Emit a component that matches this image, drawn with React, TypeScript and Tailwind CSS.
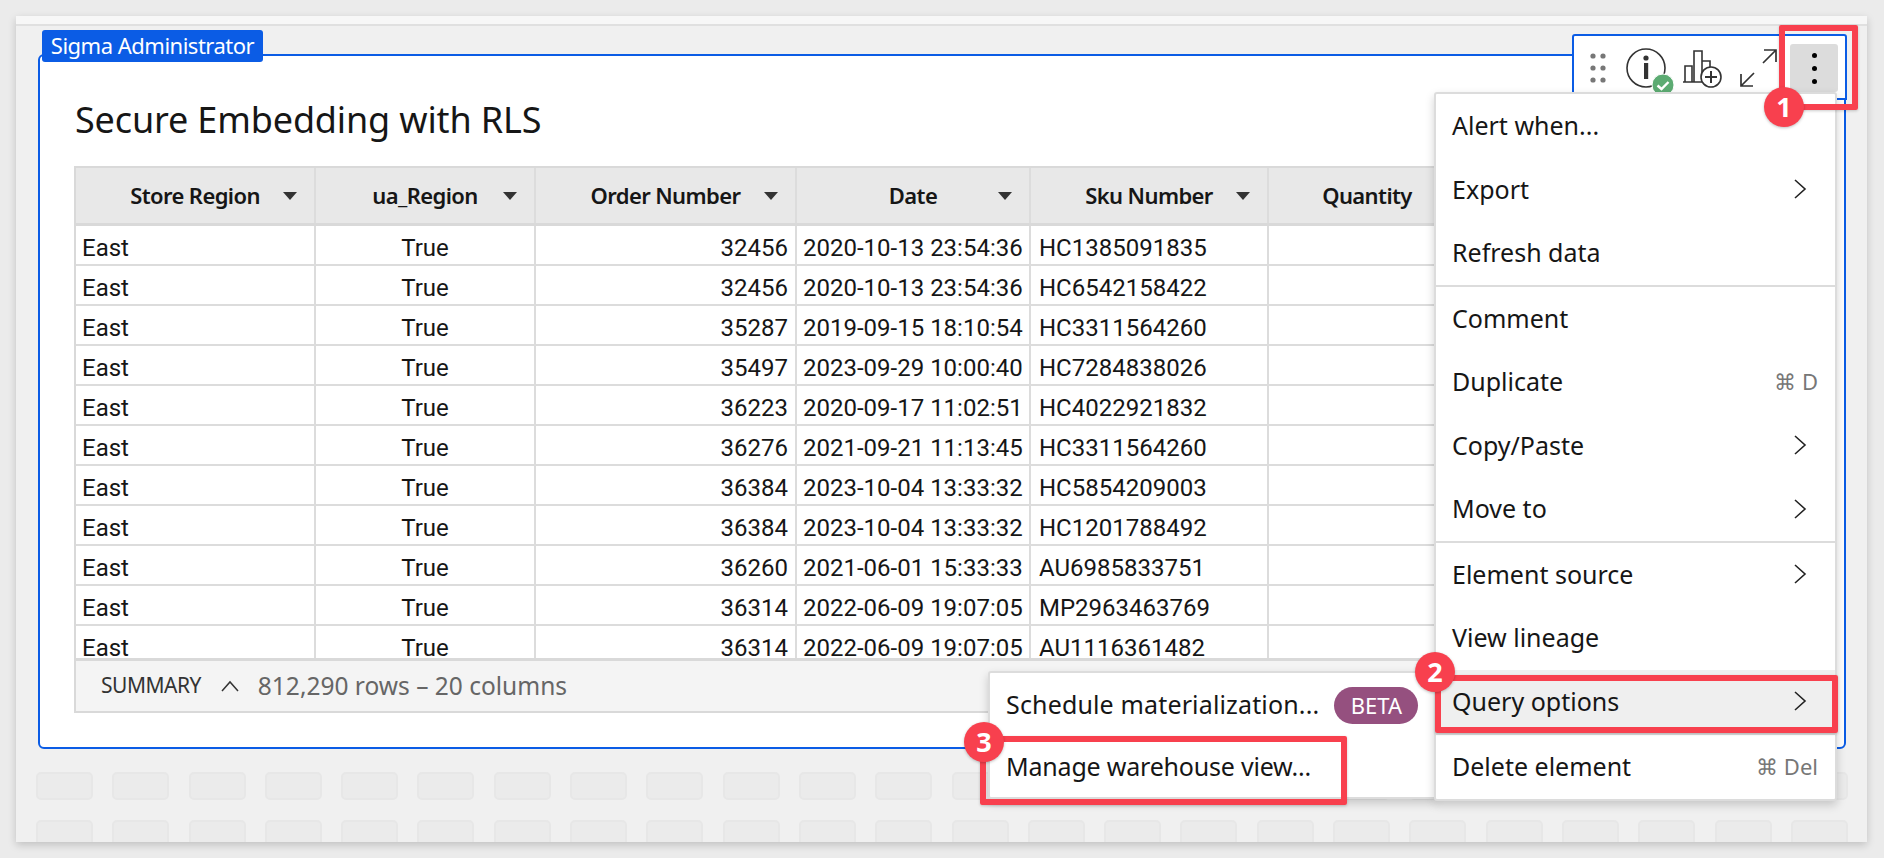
import React from "react";

const rows = [
  ["32456", "2020-10-13 23:54:36", "HC1385091835"],
  ["32456", "2020-10-13 23:54:36", "HC6542158422"],
  ["35287", "2019-09-15 18:10:54", "HC3311564260"],
  ["35497", "2023-09-29 10:00:40", "HC7284838026"],
  ["36223", "2020-09-17 11:02:51", "HC4022921832"],
  ["36276", "2021-09-21 11:13:45", "HC3311564260"],
  ["36384", "2023-10-04 13:33:32", "HC5854209003"],
  ["36384", "2023-10-04 13:33:32", "HC1201788492"],
  ["36260", "2021-06-01 15:33:33", "AU6985833751"],
  ["36314", "2022-06-09 19:07:05", "MP2963463769"],
  ["36314", "2022-06-09 19:07:05", "AU1116361482"],
];

const headers = [
  { label: "Store Region", w: "w-[240px]" },
  { label: "ua_Region", w: "w-[220px]" },
  { label: "Order Number", w: "w-[261px]" },
  { label: "Date", w: "w-[234px]" },
  { label: "Sku Number", w: "w-[238px]" },
  { label: "Quantity", w: "w-[198px]" },
];

function Chevron() {
  return (
    <svg width="14" height="24" viewBox="0 0 14 24" fill="none" stroke="#222" strokeWidth="1.6">
      <path d="M2 3l10 9-10 9" />
    </svg>
  );
}

function Item({ label, right, chevron, active }: { label: string; right?: string; chevron?: boolean; active?: boolean }) {
  return (
    <div className={`flex h-[63.5px] items-center justify-between pl-[16px] pr-[28px] ${active ? "bg-[#efefef]" : ""}`}>
      <span>{label}</span>
      {chevron && <Chevron />}
      {right && <span className="-mr-[11px] text-[22px] text-[#777]">{right}</span>}
    </div>
  );
}

function Badge({ n, className }: { n: string; className: string }) {
  return (
    <div className={`absolute flex h-[40px] w-[40px] items-center justify-center rounded-full bg-[#f8404e] text-[27px] font-bold text-white shadow-[0_1px_3px_rgba(0,0,0,0.25)] ${className}`}>
      {n}
    </div>
  );
}

export default function App() {
  return (
    <div className="relative h-[858px] w-[1884px] overflow-hidden bg-[#ebebeb] pl-[16px] pt-[16px] font-['Noto_Sans',sans-serif] text-[#161616]">
      <div className="flex h-[826px] w-[1851px] flex-col overflow-hidden bg-[#f0f0f0] shadow-[0_3px_8px_rgba(0,0,0,0.18)]">
        <div className="h-[10px] shrink-0 border-b-2 border-[#e0e0e0] bg-[#f7f7f7]" />

        <div className="relative ml-[22px] mt-[28px] h-[695px] w-[1808px] shrink-0 rounded-md border-2 border-[#0b5ce5] bg-white">
          <h1 className="ml-[35px] mt-[34px] h-[62px] text-[36px] leading-[60px] tracking-[-0.15px]">Secure Embedding with RLS</h1>

          <div className="ml-[34px] mt-[14px] flex h-[547px] w-[1740px] flex-col border-2 border-[#d9d9d9]">
            <div className="flex h-[58px] shrink-0 border-b-[3px] border-[#d9d9d9] bg-[#e8e8e8] text-[22px] font-semibold tracking-[-0.6px]">
              {headers.map((h) => (
                <div key={h.label} className={`relative flex shrink-0 items-center justify-center border-r-2 border-[#dcdcdc] ${h.w}`}>
                  <span>{h.label}</span>
                  <span className="absolute right-[17px] top-[24px] h-0 w-0 border-x-[7px] border-t-[8px] border-x-transparent border-t-[#333]" />
                </div>
              ))}
            </div>

            <div className="min-h-0 flex-1 overflow-hidden font-['Roboto',sans-serif] text-[24px] leading-[44px]">
              {rows.map((r, i) => (
                <div key={i} className="flex h-[40px] border-b-2 border-[#dcdcdc]">
                  <div className="w-[240px] shrink-0 border-r-2 border-[#dcdcdc] pl-[6px]">East</div>
                  <div className="w-[220px] shrink-0 border-r-2 border-[#dcdcdc] text-center">True</div>
                  <div className="w-[261px] shrink-0 border-r-2 border-[#dcdcdc] pr-[7px] text-right">{r[0]}</div>
                  <div className="w-[234px] shrink-0 border-r-2 border-[#dcdcdc] pl-[6px]">{r[1]}</div>
                  <div className="w-[238px] shrink-0 border-r-2 border-[#dcdcdc] pl-[8px]">{r[2]}</div>
                  <div className="w-[198px] shrink-0 border-r-2 border-[#dcdcdc]" />
                </div>
              ))}
            </div>

            <div className="flex h-[53px] shrink-0 items-center border-t-[3px] border-[#d9d9d9] bg-[#f4f4f4] pl-[25px]">
              <span className="text-[21px] tracking-[-0.5px] text-[#333]">SUMMARY</span>
              <svg className="ml-[19px]" width="20" height="14" viewBox="0 0 20 14" fill="none" stroke="#333" strokeWidth="1.5">
                <path d="M2 12l8-9 8 9" />
              </svg>
              <span className="ml-[18px] text-[24.5px] text-[#666]">812,290 rows – 20 columns</span>
            </div>
          </div>
        </div>

        <div className="ml-[20px] mt-[23px] flex flex-col gap-[20px]">
          {[0, 1].map((row) => (
            <div key={row} className="flex gap-[19.3px]">
              {Array.from({ length: 24 }).map((_, i) => (
                <div key={i} className="h-[28px] w-[57px] shrink-0 rounded-[5px] border-2 border-[#e7e7e7] bg-[#ebebeb]" />
              ))}
            </div>
          ))}
        </div>
      </div>

      {/* card label */}
      <div className="absolute left-[42px] top-[30px] flex h-[32px] w-[221px] items-center justify-center rounded-[3px] bg-[#0b5ce5] pb-[2px] text-[22px] tracking-[-0.5px] text-white">
        Sigma Administrator
      </div>

      {/* floating element toolbar */}
      <div className="absolute left-[1572px] top-[34px] flex h-[66px] w-[275px] items-center rounded-t-[3px] border-2 border-[#0b5ce5] bg-white pl-[16px] pt-[2px]">
        <svg width="18" height="36" viewBox="0 0 18 36" fill="#777">
          <circle cx="3" cy="6" r="2.6" />
          <circle cx="13" cy="6" r="2.6" />
          <circle cx="3" cy="18" r="2.6" />
          <circle cx="13" cy="18" r="2.6" />
          <circle cx="3" cy="30" r="2.6" />
          <circle cx="13" cy="30" r="2.6" />
        </svg>
        <svg className="ml-[17px]" width="50" height="56" viewBox="0 0 50 56" fill="none">
          <circle cx="21" cy="28" r="19" stroke="#333" strokeWidth="1.6" />
          <circle cx="21" cy="18" r="2.6" fill="#333" />
          <rect x="19" y="23" width="4.2" height="16" fill="#333" />
          <circle cx="38" cy="45" r="11" fill="#5cab72" stroke="#fff" strokeWidth="1" />
          <path d="M32.5 45.5l4 3.5 7-7" stroke="#fff" strokeWidth="2.4" />
        </svg>
        <svg className="ml-[5px]" width="45" height="56" viewBox="0 0 45 56" fill="none" stroke="#333" strokeWidth="1.6">
          <path d="M3 42h26M5 42V26h7v16M14 42V11h8v31M22 21h8v6" />
          <circle cx="31" cy="37" r="10" fill="#fff" />
          <path d="M31 31v12M25 37h12" strokeWidth="2" />
        </svg>
        <svg className="ml-[12px]" width="43" height="44" viewBox="0 0 43 44" fill="none" stroke="#333" strokeWidth="1.7">
          <path d="M4 40L17 27M4 28v12h12M26 17L39 4M27 4h12v12" />
        </svg>
        <div className="ml-[10px] flex h-[48px] w-[48px] flex-col items-center justify-center gap-[8px] rounded-[3px] bg-[#dcdcdc]">
          <span className="h-[5px] w-[5px] rounded-full bg-black" />
          <span className="h-[5px] w-[5px] rounded-full bg-black" />
          <span className="h-[5px] w-[5px] rounded-full bg-black" />
        </div>
      </div>

      {/* submenu */}
      <div className="absolute left-[988px] top-[671px] h-[128px] w-[448px] rounded-l-[3px] border-2 border-[#dcdcdc] bg-white text-[25px] shadow-[0_4px_10px_rgba(0,0,0,0.18)]">
        <div className="flex h-[64px] items-center pl-[16px]">
          <span className="tracking-[0.15px]">Schedule materialization...</span>
          <span className="ml-[15px] flex h-[37px] w-[84px] items-center justify-center rounded-full bg-[#95507f] text-[22px] text-white">BETA</span>
        </div>
        <div className="flex h-[60px] items-center pl-[16px] tracking-[-0.2px]">Manage warehouse view...</div>
      </div>

      {/* main menu */}
      <div className="absolute left-[1434px] top-[92px] w-[403px] divide-y-2 divide-[#dcdcdc] rounded-[3px] border-2 border-[#dcdcdc] bg-white text-[25px] shadow-[0_4px_10px_rgba(0,0,0,0.18)]">
        <div>
          <Item label="Alert when..." />
          <Item label="Export" chevron />
          <Item label="Refresh data" />
        </div>
        <div>
          <Item label="Comment" />
          <Item label="Duplicate" right="⌘ D" />
          <Item label="Copy/Paste" chevron />
          <Item label="Move to" chevron />
        </div>
        <div>
          <Item label="Element source" chevron />
          <Item label="View lineage" />
          <Item label="Query options" chevron active />
        </div>
        <div>
          <Item label="Delete element" right="⌘ Del" />
        </div>
      </div>

      {/* annotations */}
      <div className="absolute left-[1779px] top-[25px] h-[85px] w-[79px] rounded-[2px] border-[6px] border-[#f8404e] shadow-[0_1px_3px_rgba(0,0,0,0.2)]" />
      <div className="absolute left-[1435px] top-[675px] h-[58px] w-[403px] rounded-[2px] border-[6px] border-[#f8404e] shadow-[0_1px_3px_rgba(0,0,0,0.2)]" />
      <div className="absolute left-[980px] top-[736px] h-[69px] w-[367px] rounded-[2px] border-[6px] border-[#f8404e] shadow-[0_1px_3px_rgba(0,0,0,0.2)]" />
      <Badge n="1" className="left-[1764px] top-[87px]" />
      <Badge n="2" className="left-[1415px] top-[652px]" />
      <Badge n="3" className="left-[964px] top-[722px]" />
    </div>
  );
}
